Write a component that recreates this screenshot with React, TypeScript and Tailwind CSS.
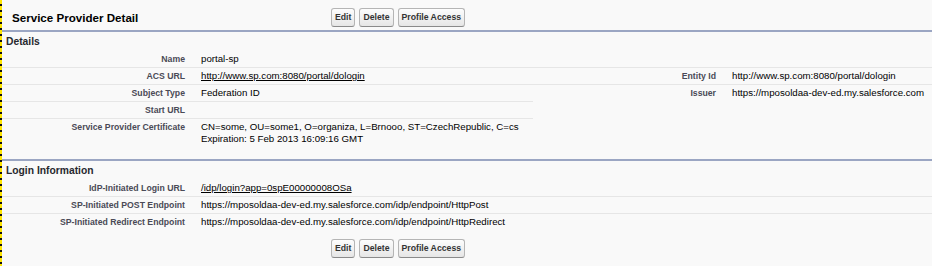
import React from "react";

const btn =
  "h-[19px] px-[3px] flex items-center rounded-[3px] border border-[#b5b5b5] border-b-[#8a8a8a] bg-gradient-to-b from-[#fdfdfd] to-[#e6e6e6] text-[8.7px] font-bold text-[#333]";

function Buttons() {
  return (
    <div className="flex gap-[4px]">
      <button className={btn}>Edit</button>
      <button className={btn}>Delete</button>
      <button className={btn}>Profile Access</button>
    </div>
  );
}

function Label({ children, line = true }: { children?: React.ReactNode; line?: boolean }) {
  return (
    <div
      className={`pr-[8px] py-[2px] leading-[12px] text-right text-[8.7px] font-bold text-[#4a4a56] ${
        line ? "border-b border-[#e6e6e6]" : "border-b border-transparent"
      }`}
    >
      {children}
    </div>
  );
}

function Value({ children, line = true }: { children?: React.ReactNode; line?: boolean }) {
  return (
    <div
      className={`pl-[8px] py-[2px] leading-[12px] text-[9.7px] text-black ${
        line ? "border-b border-[#e6e6e6]" : "border-b border-transparent"
      }`}
    >
      {children}
    </div>
  );
}

function SectionHeader({ title }: { title: string }) {
  return (
    <div className="h-[21px] flex items-center pl-[4px] border-t-2 border-[#9ba6c3] text-[10.3px] font-bold text-[#27282e]">
      {title}
    </div>
  );
}

export default function App() {
  return (
    <div className="flex w-[932px] h-[266px] font-['Liberation_Sans',Arial,sans-serif] bg-[#f9f9f9]">
      <div className="w-[2px] shrink-0 bg-[repeating-linear-gradient(to_bottom,#ffe600_0px,#ffe600_4px,#111_4px,#111_6px)]" />
      <div className="flex-1 flex flex-col">
        {/* title bar */}
        <div className="flex items-start pt-[8px] h-[30px]">
          <h2 className="w-[329px] pl-[10px] pt-[2px] text-[11.6px] font-bold text-black leading-[15px]">
            Service Provider Detail
          </h2>
          <Buttons />
        </div>

        <SectionHeader title="Details" />
        <div className="grid grid-cols-[191px_340px_191px_1fr]">
          <Label>Name</Label>
          <Value>portal-sp</Value>
          <Label />
          <Value />

          <Label>ACS URL</Label>
          <Value>
            <a className="underline text-black">http://www.sp.com:8080/portal/dologin</a>
          </Value>
          <Label>Entity Id</Label>
          <Value>http://www.sp.com:8080/portal/dologin</Value>

          <Label>Subject Type</Label>
          <Value>Federation ID</Value>
          <Label line={false}>Issuer</Label>
          <Value line={false}>https://mposoldaa-dev-ed.my.salesforce.com</Value>

          <Label>Start URL</Label>
          <Value />
          <Label line={false} />
          <Value line={false} />

          <Label line={false}>Service Provider Certificate</Label>
          <Value line={false}>
            CN=some, OU=some1, O=organiza, L=Brnooo, ST=CzechRepublic, C=cs
            <br />
            Expiration: 5 Feb 2013 16:09:16 GMT
          </Value>
          <Label line={false} />
          <Value line={false} />
        </div>

        <div className="mt-[11px]">
          <SectionHeader title="Login Information" />
        </div>
        <div className="grid grid-cols-[191px_1fr]">
          <Label>IdP-Initiated Login URL</Label>
          <Value>
            <a className="underline text-black">/idp/login?app=0spE00000008OSa</a>
          </Value>
          <Label>SP-Initiated POST Endpoint</Label>
          <Value>https://mposoldaa-dev-ed.my.salesforce.com/idp/endpoint/HttpPost</Value>
          <Label line={false}>SP-Initiated Redirect Endpoint</Label>
          <Value line={false}>https://mposoldaa-dev-ed.my.salesforce.com/idp/endpoint/HttpRedirect</Value>
        </div>

        <div className="flex pt-[8px]">
          <div className="w-[329px]" />
          <Buttons />
        </div>
      </div>
    </div>
  );
}
